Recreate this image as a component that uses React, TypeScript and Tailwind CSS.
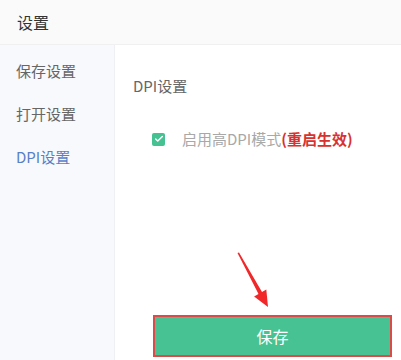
import { Check } from "lucide-react";

const menu = [
	{ label: "保存设置", active: false },
	{ label: "打开设置", active: false },
	{ label: "DPI设置", active: true },
];

export default function App() {
	return (
		<div
			className="relative w-[401px] h-[360px] overflow-hidden bg-white"
			style={{ fontFamily: '"Noto Sans CJK SC", "Noto Sans", sans-serif' }}
		>
			<header className="h-[45px] px-[17px] flex items-center bg-[#fafafa] border-b border-[#f0f0f0] text-[16px] text-[#333]">
				设置
			</header>

			<div className="flex h-[315px]">
				<aside className="w-[115px] bg-[#f7f9fc] border-r border-[#eef0f4] pt-[5px]">
					{menu.map((item) => (
						<div
							key={item.label}
							className={
								"h-[43px] pl-[16px] flex items-center text-[15px] " +
								(item.active ? "text-[#5a7fc6]" : "text-[#666]")
							}
						>
							{item.label}
						</div>
					))}
				</aside>

				<main className="flex-1 flex flex-col pl-[18px]">
					<h2 className="mt-[31px] text-[15px] leading-[20px] text-[#666]">DPI设置</h2>

					<label className="mt-[33px] ml-[19px] flex items-center gap-[17px] text-[15px] leading-[20px]">
						<span className="w-[13px] h-[13px] rounded-[2px] bg-[#45c192] flex items-center justify-center">
							<Check className="w-[10px] h-[10px] text-white" strokeWidth={3.5} />
						</span>
						<span className="text-[#a8a8a8]">
							启用高DPI模式
							<span className="font-bold text-[#d8312e]">(重启生效)</span>
						</span>
					</label>

					<div className="mt-auto mb-[3px] ml-[20px] mr-[9px] h-[42px] border-2 border-[#dc4b48] bg-[#47c393] flex items-center justify-center text-white text-[16px]">
						保存
					</div>
				</main>
			</div>

			<svg
				className="absolute inset-0 pointer-events-none"
				width="401"
				height="360"
				viewBox="0 0 401 360"
			>
				<polygon
					points="237.5,253 239,252.5 262,292 266.3,289.6 268,307 254.1,296.4 258.5,294"
					fill="#f0282a"
				/>
			</svg>
		</div>
	);
}
